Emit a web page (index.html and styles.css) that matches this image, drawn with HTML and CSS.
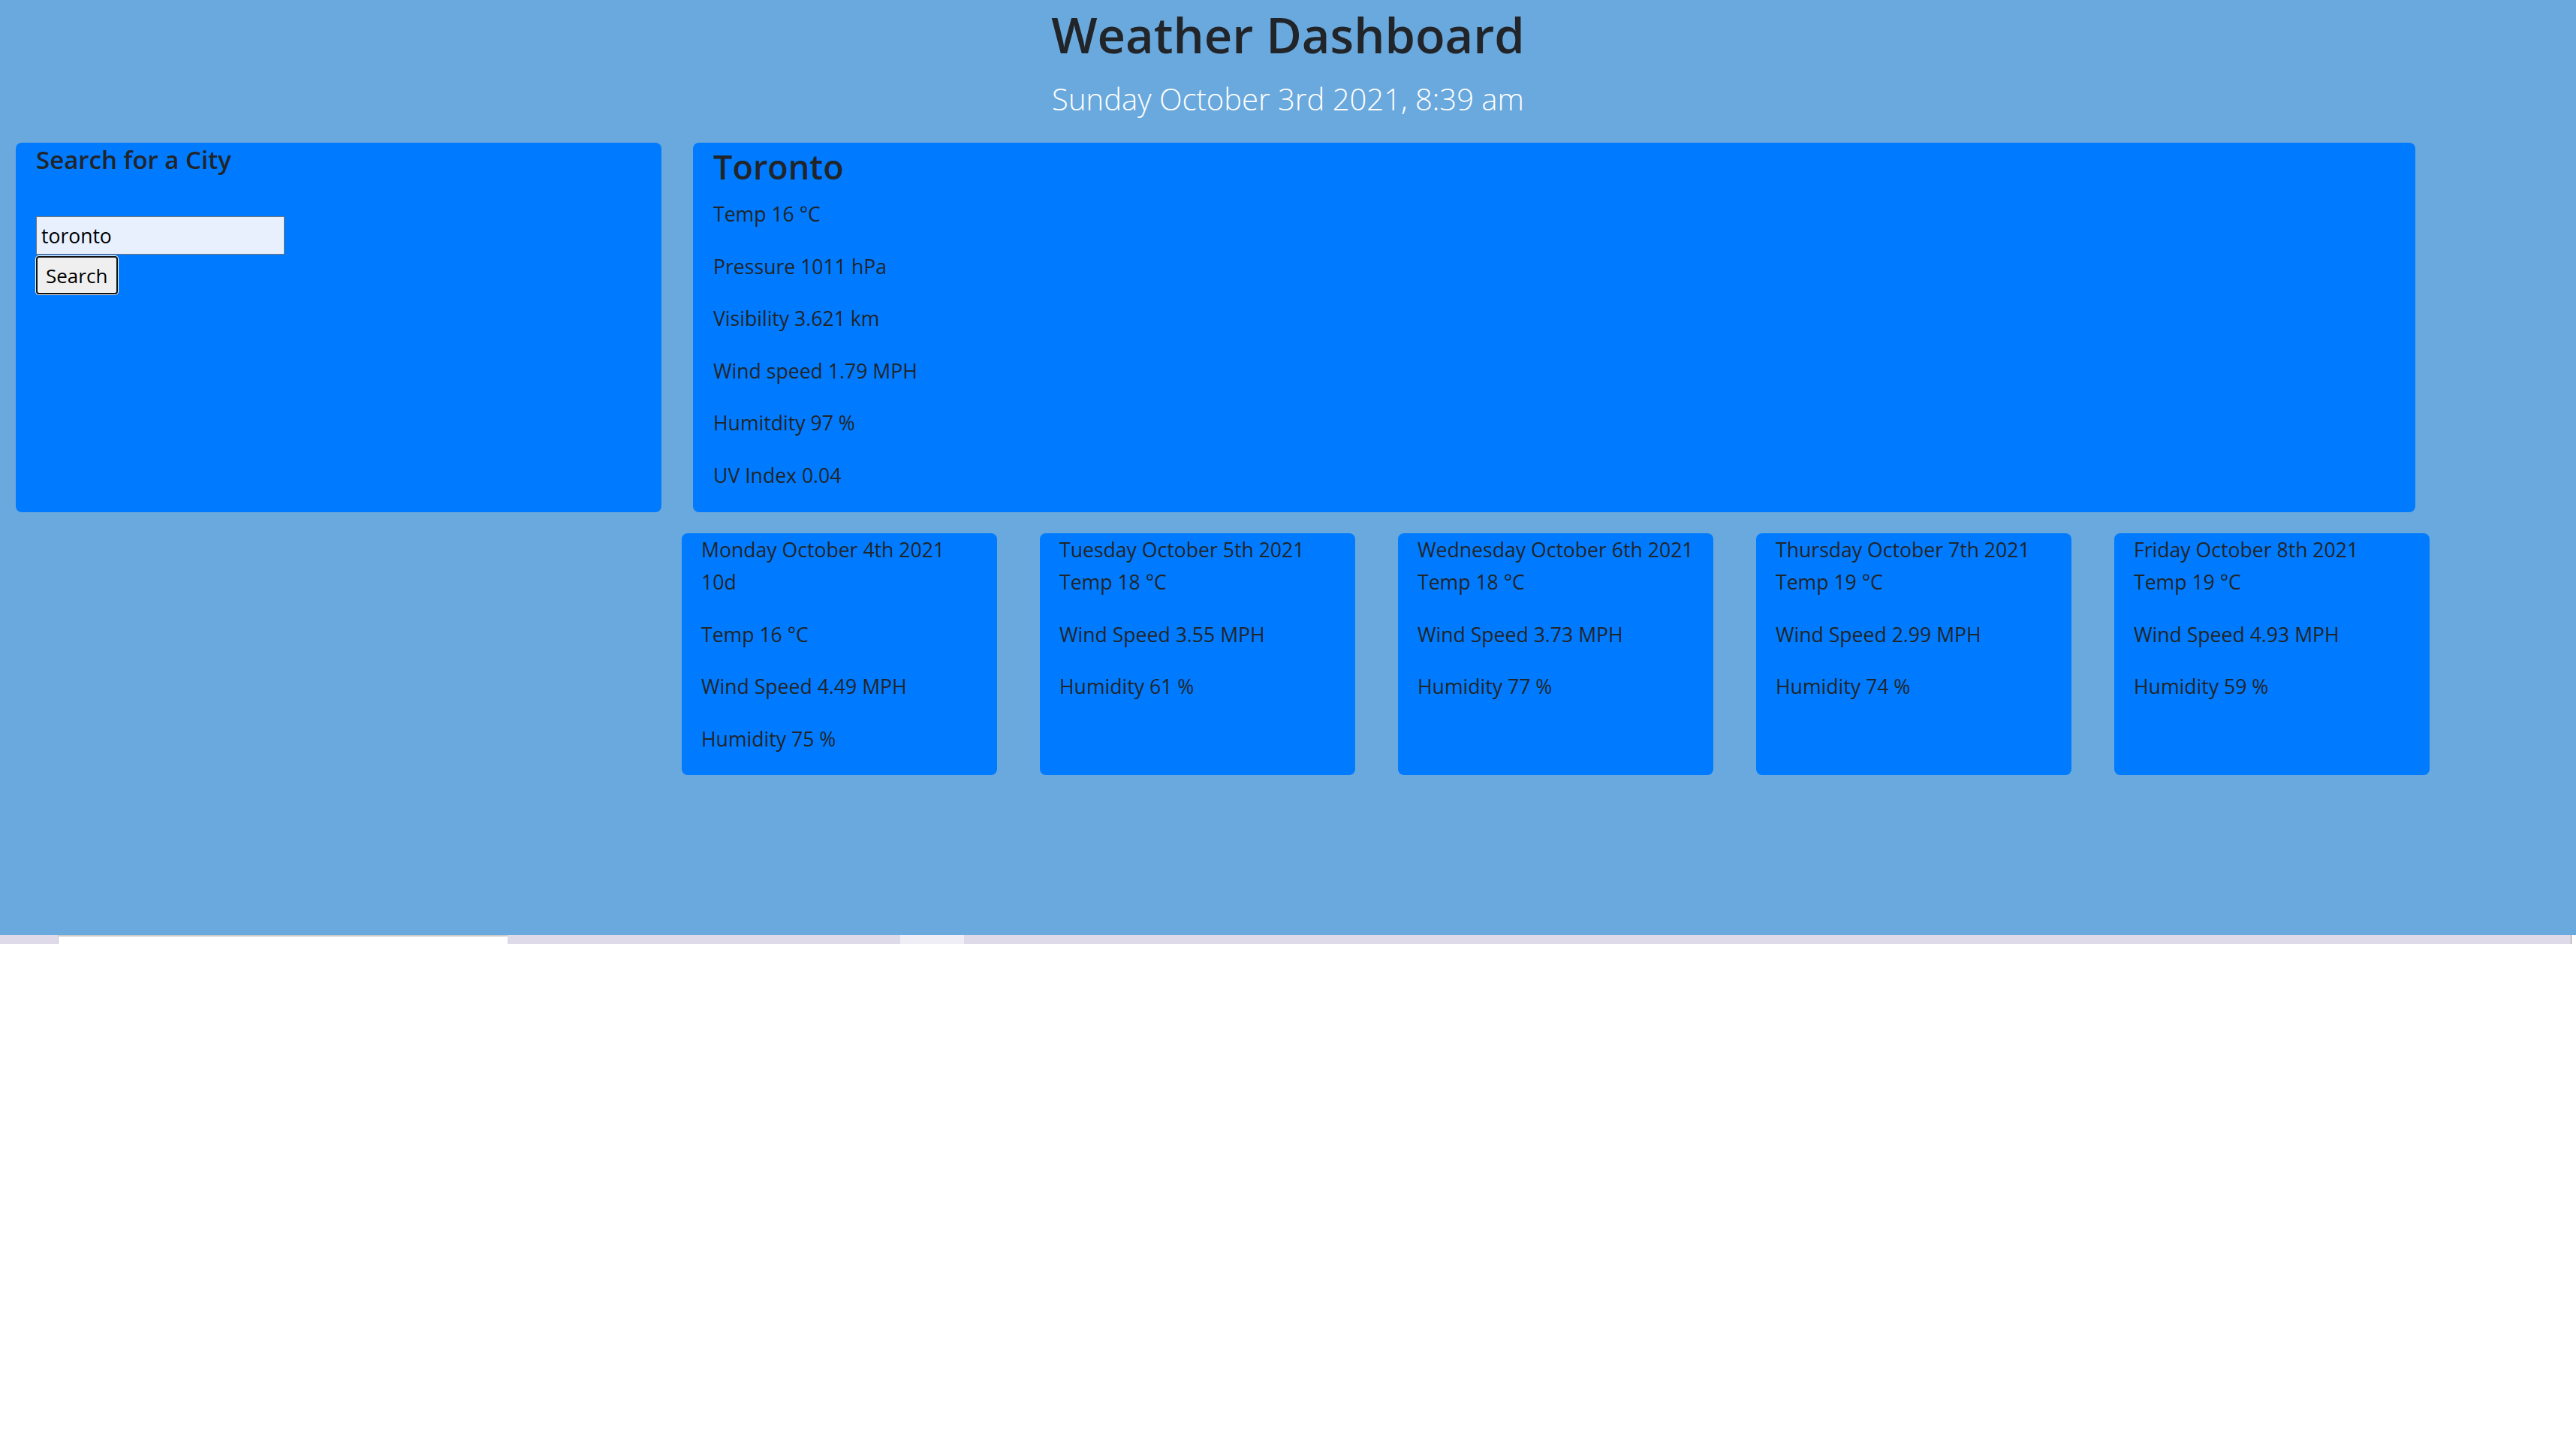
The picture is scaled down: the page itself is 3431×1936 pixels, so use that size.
FILE: index.html
```html
<!DOCTYPE html>
<html lang="en">
<head>
<meta charset="utf-8">
<title>Weather Dashboard</title>
<link rel="stylesheet" href="styles.css">
</head>
<body>
<div class="page">
  <header class="hero">
    <h1 class="hero-title">Weather Dashboard</h1>
    <p class="hero-date">Sunday October 3rd 2021, 8:39 am</p>
  </header>
  <main class="layout">
    <section class="card search-card">
      <h5 class="search-title">Search for a City</h5>
      <form class="search-form">
        <input class="search-input" type="text" value="toronto">
        <button class="search-btn" type="button">Search</button>
      </form>
    </section>
    <section class="card current-card">
      <h2 class="city">Toronto</h2>
      <p class="stat">Temp 16 °C</p>
      <p class="stat">Pressure 1011 hPa</p>
      <p class="stat">Visibility 3.621 km</p>
      <p class="stat">Wind speed 1.79 MPH</p>
      <p class="stat">Humitdity 97 %</p>
      <p class="stat">UV Index 0.04</p>
    </section>
    <div class="forecast">
      <article class="card fc-card">
        <div class="fc-date">Monday October 4th 2021</div>
        <p class="stat">10d</p>
        <p class="stat">Temp 16 °C</p>
        <p class="stat">Wind Speed 4.49 MPH</p>
        <p class="stat">Humidity 75 %</p>
      </article>
      <article class="card fc-card">
        <div class="fc-date">Tuesday October 5th 2021</div>
        <p class="stat">Temp 18 °C</p>
        <p class="stat">Wind Speed 3.55 MPH</p>
        <p class="stat">Humidity 61 %</p>
      </article>
      <article class="card fc-card">
        <div class="fc-date">Wednesday October 6th 2021</div>
        <p class="stat">Temp 18 °C</p>
        <p class="stat">Wind Speed 3.73 MPH</p>
        <p class="stat">Humidity 77 %</p>
      </article>
      <article class="card fc-card">
        <div class="fc-date">Thursday October 7th 2021</div>
        <p class="stat">Temp 19 °C</p>
        <p class="stat">Wind Speed 2.99 MPH</p>
        <p class="stat">Humidity 74 %</p>
      </article>
      <article class="card fc-card">
        <div class="fc-date">Friday October 8th 2021</div>
        <p class="stat">Temp 19 °C</p>
        <p class="stat">Wind Speed 4.93 MPH</p>
        <p class="stat">Humidity 59 %</p>
      </article>
    </div>
  </main>
</div>
<div class="tabstrip">
  <span class="strip-seg strip-start"></span>
  <span class="strip-seg strip-tab"></span>
  <span class="strip-seg strip-mid"></span>
  <span class="strip-seg strip-light"></span>
  <span class="strip-seg strip-rest"></span>
</div>
</body>
</html>
```

FILE: styles.css
```css
* { box-sizing: border-box; }

html, body {
  margin: 0;
  padding: 0;
  background: #ffffff;
}

body {
  font-family: "Open Sans", "Noto Sans", sans-serif;
  color: #212529;
}

.page {
  height: 1245px;
  background: #6aa9dd;
  overflow: hidden;
}

.hero {
  text-align: center;
  padding-top: 7px;
}

.hero-title {
  margin: 0;
  font-size: 65px;
  line-height: 78px;
  font-weight: 600;
  color: #212529;
}

.hero-date {
  margin: 19px 0 0;
  font-size: 40px;
  line-height: 56px;
  font-weight: 300;
  color: #ffffff;
}

.layout {
  display: grid;
  grid-template-columns: 860px 2294px;
  column-gap: 42px;
  row-gap: 28px;
  padding: 0 21px;
  margin-top: 30px;
}

.card {
  background: #007bff;
  border-radius: 8px;
}

.stat {
  margin: 0 0 23.6px;
  font-size: 26.6px;
  line-height: 46px;
  color: #212529;
}

/* search card */
.search-card {
  padding: 3px 27px 0;
}

.search-title {
  margin: 0;
  font-size: 33px;
  line-height: 40px;
  font-weight: 600;
  color: #212529;
}

.search-form {
  display: flex;
  flex-direction: column;
  align-items: flex-start;
  margin-top: 55px;
}

.search-input {
  width: 331px;
  height: 51px;
  padding: 0 6px;
  border: 1px solid #767676;
  background: #e8f0fe;
  font-family: inherit;
  font-size: 26.5px;
  color: #000;
  outline: none;
}

.search-btn {
  margin-top: 2px;
  width: 109px;
  height: 51px;
  padding: 0 11px;
  border: 2px solid #111;
  border-radius: 4px;
  box-shadow: 0 0 0 1px #ffffff;
  background: #efefef;
  font-family: inherit;
  font-size: 26px;
  color: #000;
  text-align: left;
}

/* current weather */
.current-card {
  height: 492px;
  padding: 5px 27px 0;
}

.city {
  margin: 0 0 13px;
  font-size: 45px;
  line-height: 54px;
  font-weight: 600;
  color: #212529;
}

/* forecast */
.forecast {
  grid-column: 2;
  display: flex;
  gap: 57px;
  margin-left: -15px;
  margin-right: -40px;
}

.fc-card {
  flex: 0 0 420px;
  height: 322px;
  padding: 2px 26px 0;
}

.fc-date {
  font-size: 26.6px;
  line-height: 40px;
}

/* bottom strip */
.tabstrip {
  display: flex;
  height: 12px;
}

.strip-seg {
  display: block;
  height: 100%;
}

.strip-start {
  width: 77px;
  background: #dfdaea;
}

.strip-tab {
  width: 599px;
  background: #ffffff;
  border-top: 2px solid #cacaca;
  border-left: 1px solid #c6c6c6;
}

.strip-mid {
  width: 523px;
  background: #dfdaea;
}

.strip-light {
  width: 85px;
  background: #efedf5;
}

.strip-rest {
  width: 2141px;
  background: #dfdaea;
  border-right: 1px solid #8c8c8c;
}
```
